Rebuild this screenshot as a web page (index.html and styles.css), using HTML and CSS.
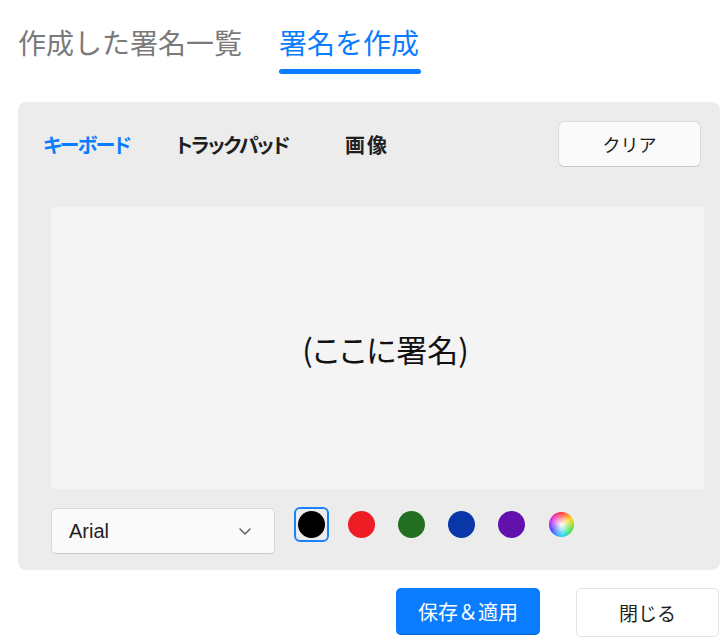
FILE: index.html
```html
<!DOCTYPE html>
<html lang="ja">
<head>
    <meta charset="UTF-8">
    <meta name="viewport" content="width=device-width, initial-scale=1.0">
    <title>署名を作成</title>
    <link rel="stylesheet" href="styles.css">
</head>
<body>
    <div class="page">
        <!-- 上部タブ -->
        <div class="head-tabs">
            <div class="head-tab">作成した署名一覧</div>
            <div class="head-tab active">署名を作成</div>
        </div>

        <div class="panel">
            <div class="mode-bar">
                <div class="modes">
                    <span class="mode mode-kb active">キーボード</span>
                    <span class="mode mode-tp">トラックパッド</span>
                    <span class="mode mode-img">画像</span>
                </div>
                <button class="btn-clear">クリア</button>
            </div>

            <div class="sign-area">(ここに署名)</div>

            <div class="tools">
                <div class="font-select">
                    <span>Arial</span>
                    <svg width="14" height="9" viewBox="0 0 14 9"><path d="M2 2l5 5 5-5" fill="none" stroke="#666" stroke-width="1.6" stroke-linecap="round" stroke-linejoin="round"/></svg>
                </div>
                <div class="swatches">
                    <span class="swatch selected"><i class="dot black"></i></span>
                    <span class="swatch"><i class="dot red"></i></span>
                    <span class="swatch"><i class="dot green"></i></span>
                    <span class="swatch"><i class="dot blue"></i></span>
                    <span class="swatch"><i class="dot purple"></i></span>
                    <span class="swatch"><i class="dot rainbow"></i></span>
                </div>
            </div>
        </div>

        <div class="footer">
            <button class="btn-save">保存＆適用</button>
            <button class="btn-close">閉じる</button>
        </div>
    </div>
</body>
</html>
```

FILE: styles.css
```css
body {
    margin: 0;
    padding: 0;
    background-color: #fff;
    color: #1e1e1e;
    font-family: "Noto Sans CJK JP", "Noto Sans", sans-serif;
}
.page {
    padding: 0 7px 0 18px;
}
.head-tabs {
    display: flex;
    gap: 37px;
    height: 102px;
}
.head-tab {
    font-size: 28px;
    line-height: 30px;
    padding-top: 27px;
    color: #7a7a7a;
}
.head-tab.active {
    color: #0a7cff;
}
.head-tab.active::after {
    content: "";
    display: block;
    height: 5px;
    margin: 12px -2px 0 0;
    border-radius: 3px;
    background-color: #0a7cff;
}
.panel {
    background-color: #ececec;
    border-radius: 8px;
    padding: 19px 16px 16px 33px;
}
.mode-bar {
    display: flex;
    justify-content: space-between;
    align-items: center;
    margin: 0 3px 40px -8px;
}
.modes {
    display: flex;
    font-feature-settings: "palt";
}
.mode {
    font-size: 20px;
    font-weight: bold;
    letter-spacing: -1.5px;
    color: #1e1e1e;
}
.mode-kb { width: 133px; }
.mode-tp { width: 169px; }
.mode-img { letter-spacing: 2px; }
.mode.active {
    color: #0a7cff;
}
button {
    font-family: inherit;
    cursor: pointer;
}
.btn-clear {
    width: 143px;
    height: 46px;
    font-size: 18px;
    color: #1e1e1e;
    background-color: #fafafa;
    border: 1px solid #dadada;
    border-bottom-color: #c8c8c8;
    border-radius: 6px;
}
.sign-area {
    height: 282px;
    background-color: #f4f4f4;
    border-radius: 6px 0 0 6px;
    display: flex;
    align-items: center;
    justify-content: center;
    padding-left: 16px;
    font-size: 31px;
    color: #111;
    font-feature-settings: "palt";
}
.tools {
    display: flex;
    align-items: flex-start;
    margin-top: 19px;
}
.font-select {
    width: 224px;
    height: 46px;
    box-sizing: border-box;
    background-color: #fafafa;
    border: 1px solid #d8d8d8;
    border-bottom-color: #c8c8c8;
    border-radius: 5px;
    display: flex;
    align-items: center;
    justify-content: space-between;
    padding: 0 22px 0 17px;
    font-family: "Liberation Sans", Arial, sans-serif;
    font-size: 20px;
}
.swatches {
    display: flex;
    gap: 15px;
    margin: -1px 0 0 19px;
}
.swatch {
    width: 35px;
    height: 35px;
    box-sizing: border-box;
    border: 2px solid transparent;
    border-radius: 6px;
    display: flex;
    align-items: center;
    justify-content: center;
}
.swatch.selected {
    border-color: #1a82ff;
}
.dot {
    width: 27px;
    height: 27px;
    border-radius: 50%;
}
.black { background-color: #000; }
.red { background-color: #ee1c25; }
.green { background-color: #237023; }
.blue { background-color: #0a37a8; }
.purple { background-color: #6211ad; }
.rainbow {
    width: 25px;
    height: 25px;
    background: radial-gradient(circle, #fff 0%, rgba(255, 255, 255, 0) 70%),
        conic-gradient(#ff3030, #ffd000, #40e040, #20d0ff, #4040ff, #e020e0, #ff3030);
}
.footer {
    display: flex;
    justify-content: flex-end;
    gap: 36px;
    margin-top: 18px;
    padding-right: 1px;
}
.btn-save {
    width: 144px;
    height: 47px;
    font-size: 20px;
    color: #fff;
    background-color: #0a7cff;
    border: none;
    border-bottom: 1px solid #0062d0;
    border-radius: 5px;
}
.btn-close {
    width: 143px;
    height: 49px;
    font-size: 19px;
    color: #1e1e1e;
    background-color: #fff;
    border: 1px solid #e2e2e2;
    border-radius: 5px;
}
```
